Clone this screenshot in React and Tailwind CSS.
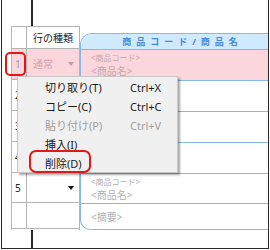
import React from "react";

const Caret = ({ color }) => (
    <svg width="6" height="4" viewBox="0 0 6 4" className="block">
        <polygon points="0,0 6,0 3,4" fill={color} />
    </svg>
);

const MenuItem = ({ label, shortcut, disabled }) => (
    <div className={"h-[19px] flex items-center pl-[27px] " + (disabled ? "text-[#a0a0a0]" : "text-[#1a1a1a]")}>
        <span className="w-[85px]">{label}</span>
        {shortcut && <span>{shortcut}</span>}
    </div>
);

const App = () => {
    return (
        <div
            className="w-[270px] h-[250px] bg-white overflow-hidden relative"
            style={{ fontFamily: '"Noto Sans", "Noto Sans CJK JP", sans-serif' }}
        >
            {/* Frame */}
            <div className="ml-px w-[268px] h-[249px] border-x border-b border-[#2a2a2a] flex flex-col">
                <div className="h-[26px] ml-[29px] w-[2px] bg-[#2a2a2a]" />

                {/* Table */}
                <div className="flex pl-[9px]">
                    {/* Left columns */}
                    <div className="w-[68px] flex flex-col border-l border-[#b5b5b5] text-[10px] leading-none">
                        <div className="h-[23px] flex border-t border-b border-[#b5b5b5] bg-white">
                            <div className="w-[15px] border-r border-[#b5b5b5]" />
                            <div className="flex-1 flex items-center pl-[6px] text-[#222]">行の種類</div>
                        </div>
                        <div className="h-[31px] flex border-b border-[#b5b5b5] bg-[#fcd6dd]">
                            <div className="w-[15px] border-r border-[#b5b5b5] flex items-center pl-[3px] text-[#999]">1</div>
                            <div className="flex-1 flex items-center justify-between pl-[6px] pr-[5px] text-[#d9a0ab]">
                                <span>通常</span>
                                <Caret color="#c89aa4" />
                            </div>
                        </div>
                        {["2", "3", "4"].map((n) => (
                            <div key={n} className="h-[31px] flex border-b border-[#b5b5b5]">
                                <div className="w-[15px] border-r border-[#b5b5b5] flex items-center pl-[3px] text-[#222]">{n}</div>
                                <div className="flex-1" />
                            </div>
                        ))}
                        <div className="h-[30px] flex border-b border-[#b5b5b5]">
                            <div className="w-[15px] border-r border-[#b5b5b5] flex items-center pl-[3px] text-[#222]">5</div>
                            <div className="flex-1 flex items-center justify-end pr-[5px]">
                                <Caret color="#111" />
                            </div>
                        </div>
                        <div className="h-[26px] flex border-b border-[#b5b5b5]">
                            <div className="w-[15px] border-r border-[#b5b5b5]" />
                            <div className="flex-1" />
                        </div>
                    </div>

                    {/* Product column */}
                    <div className="flex-1 flex flex-col border-l border-[#b5b5b5]">
                        <div className="h-[7px]" />
                        <div className="flex-1 flex flex-col border-l border-t border-b border-[#86b8ea] rounded-tl-[12px] rounded-bl-[10px] overflow-hidden text-[#b0b0b0] leading-none">
                            <div className="h-[16px] flex items-center justify-center pl-[16px] bg-[#cfe9fd] border-b border-[#86b8ea] text-[#4a86d6] text-[9px] font-bold tracking-[5px]">
                                商品コード/商品名
                            </div>
                            <div className="h-[31px] flex flex-col justify-center gap-[4px] pl-[10px] bg-[#fcd6dd] border-b border-[#86b8ea] text-[#c4a8ae]">
                                <span className="text-[8px]">&lt;商品コード&gt;</span>
                                <span className="text-[10px]">&lt;商品名&gt;</span>
                            </div>
                            <div className="h-[31px] border-b border-[#86b8ea]" />
                            <div className="h-[31px] border-b border-[#86b8ea]" />
                            <div className="h-[31px] border-b border-[#86b8ea]" />
                            <div className="h-[30px] flex flex-col justify-center gap-[4px] pl-[10px] border-b border-[#86b8ea]">
                                <span className="text-[8px]">&lt;商品コード&gt;</span>
                                <span className="text-[10px]">&lt;商品名&gt;</span>
                            </div>
                            <div className="h-[25px] flex items-center pl-[10px] text-[10px]">&lt;摘要&gt;</div>
                        </div>
                    </div>
                </div>

                <div className="flex-1 ml-[29px] w-[2px] bg-[#2a2a2a]" />
            </div>

            {/* Row 1 highlight */}
            <div className="absolute left-[5px] top-[52px] w-[21px] h-[24px] border-2 border-[#e01818] rounded-[5px]" />

            {/* Context menu */}
            <div className="absolute left-[17px] top-[76px] w-[161px] h-[97px] bg-[#f0f0f0] border border-[#c8c8c8] shadow-[2px_2px_2px_rgba(0,0,0,0.35)] pt-px text-[11px] leading-none">
                <MenuItem label="切り取り(T)" shortcut="Ctrl+X" />
                <MenuItem label="コピー(C)" shortcut="Ctrl+C" />
                <MenuItem label="貼り付け(P)" shortcut="Ctrl+V" disabled />
                <MenuItem label="挿入(I)" />
                <MenuItem label="削除(D)" />
            </div>

            {/* Delete highlight */}
            <div className="absolute left-[29px] top-[150px] w-[62px] h-[23px] border-[2.5px] border-[#e01818] rounded-[7px]" />
        </div>
    );
};

export default App;
